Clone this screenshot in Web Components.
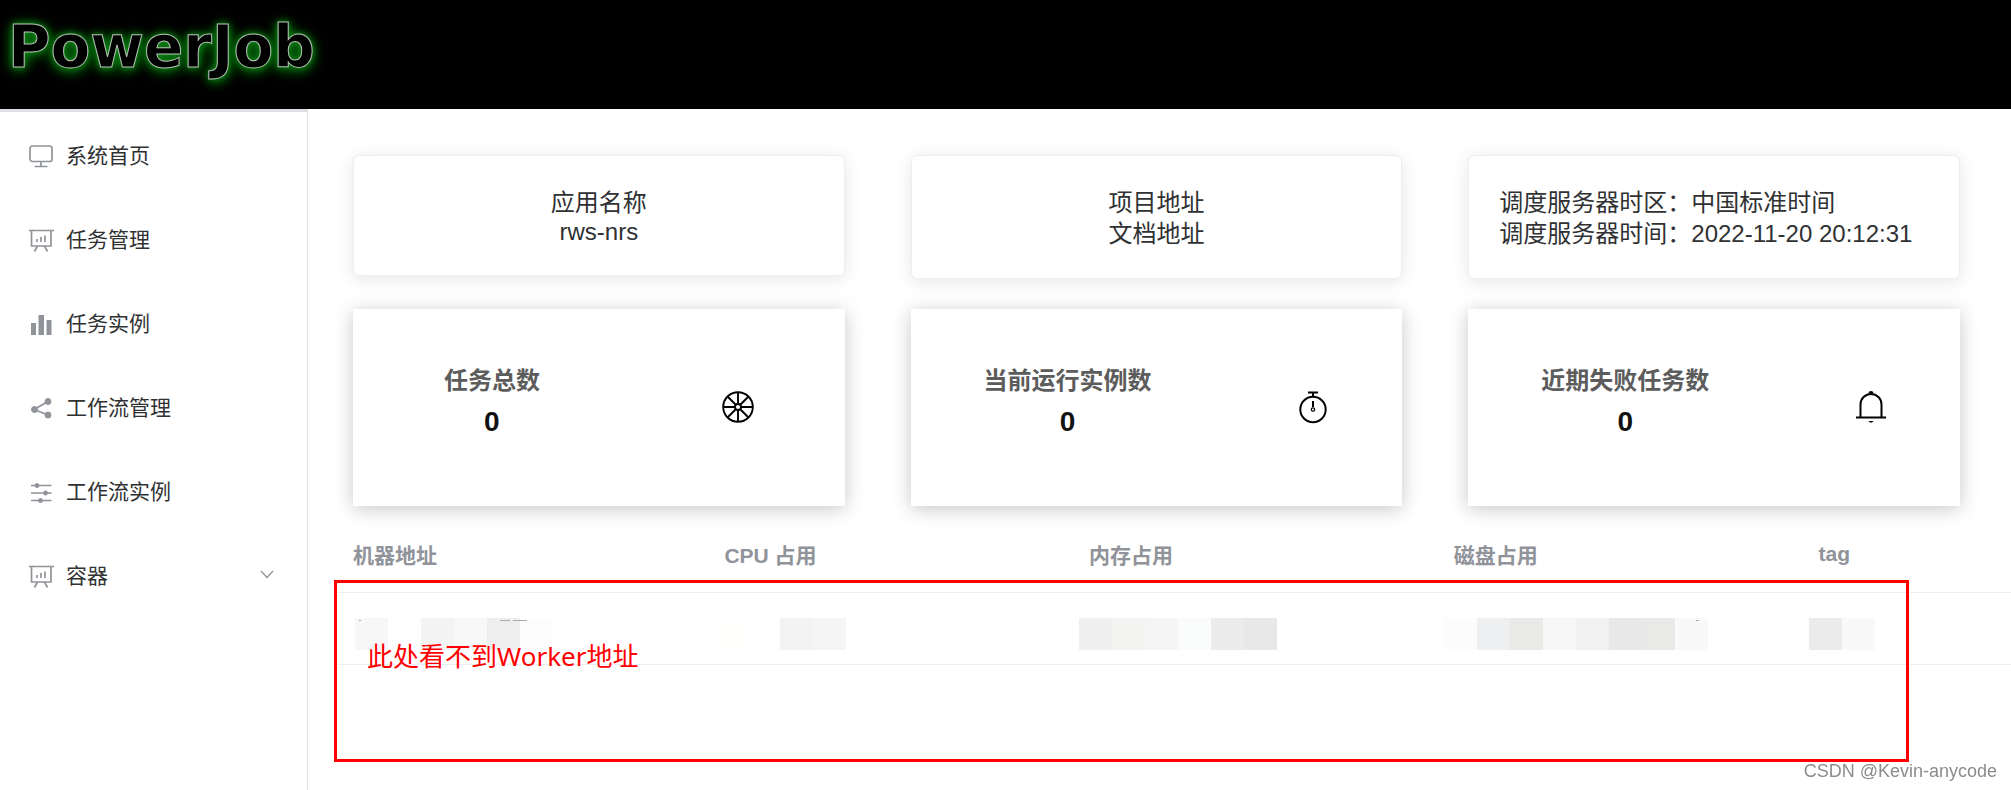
<!DOCTYPE html>
<html lang="zh-CN">
<head>
<meta charset="UTF-8">
<meta name="viewport" content="width=device-width, initial-scale=1.0">
<title>PowerJob</title>
<style>
  body {
    margin: 0;
    background: #fff;
    color: #303133;
    font-family: "Liberation Sans", "Noto Sans CJK SC", sans-serif;
  }
</style>
</head>
<body>
<power-app></power-app>

<script>
const icons = {
  monitor: `<g fill="none" stroke="currentColor" stroke-width="1.700"><rect x="1" y="1" width="22" height="15.500" rx="2.500"/><path d="M12 16.500v4.500M5.500 21.500h13"/></g>`,
  board: `<g fill="none" stroke="currentColor" stroke-width="1.700"><path d="M0 1.500h25M2.500 1.500v15.500h19.500v-15.500M8.500 17l-3 5.500M15.500 17l3 5.500"/><path d="M8 13v-3M12 13v-5M16 13v-6.500"/></g>`,
  bars: `<path fill="currentColor" d="M2 10h5v12H2zM9.500 2h5.500v20H9.500zM17.500 7h5v15h-5z"/>`,
  share: `<g fill="currentColor" stroke="currentColor"><path d="M5 12.500L19 4.500M5 12.500L19 18" stroke-width="1.800"/><circle cx="5.500" cy="12.500" r="3"/><circle cx="19" cy="4.500" r="3"/><circle cx="19" cy="18" r="3"/></g>`,
  sliders: `<g fill="currentColor" stroke="currentColor"><path d="M2 4.500h20.500M2 12h20.500M2 19.500h20.500" stroke-width="1.700"/><circle cx="8" cy="4.500" r="2"/><circle cx="16.500" cy="12" r="2"/><circle cx="11.500" cy="19.500" r="2"/></g>`,
  wheel: `<g fill="none" stroke="currentColor" stroke-width="1.900"><circle cx="16" cy="16" r="14.800"/><circle cx="16" cy="16" r="3"/><path d="M16 1v12M16 19v12M1 16h12M19 16h12M5.500 5.500l8.500 8.500M18 18l8.500 8.500M26.500 5.500l-8.500 8.500M14 18l-8.500 8.500"/></g>`,
  stopwatch: `<g fill="none" stroke="currentColor" stroke-width="2"><circle cx="16" cy="18.500" r="12.700"/><path d="M11 1.500h10M16 1.500v4M16 10v6"/><circle cx="16" cy="18.500" r="1.700" stroke-width="1.200"/></g>`,
  bell: `<g fill="none" stroke="currentColor" stroke-width="2"><path d="M5.500 26.500V13.500a10.500 10.500 0 0 1 21 0v13M1 26.500h30"/><path d="M13.500 2.500a2.500 2.500 0 0 1 5 0zM13.500 30h5l-1.500 1.500h-2z" fill="currentColor" stroke="none"/></g>`
};

class AppIcon extends HTMLElement {
  constructor() {
    super();
    this.attachShadow({ mode: "open" });
  }
  connectedCallback() {
    const size = this.getAttribute("size") || "24";
    this.shadowRoot.innerHTML = `
      <style>
        :host { display: block; flex: none; }
        svg { display: block; overflow: visible; }
      </style>
      <svg width="${size}" height="${size}" viewBox="0 0 ${size} ${size}" aria-hidden="true">${icons[this.getAttribute("name")]}</svg>
    `;
  }
}
customElements.define("app-icon", AppIcon);

class PowerHeader extends HTMLElement {
  constructor() {
    super();
    this.attachShadow({ mode: "open" });
  }
  connectedCallback() {
    this.shadowRoot.innerHTML = `
      <style>
        :host {
          display: flex;
          align-items: flex-start;
          height: 109px;
          background: #000;
        }
        a {
          padding: 15px 8px;
          color: #000;
          font: bold 58px/64px "DejaVu Sans", sans-serif;
          text-decoration: none;
          -webkit-text-stroke: 1px #b4c0b4;
          text-shadow: 0 0 6px #0a8a12, 0 2px 12px #087a10, 0 2px 16px #065c0b;
        }
      </style>
      <a href="#">PowerJob</a>
    `;
  }
}
customElements.define("power-header", PowerHeader);

class SideItem extends HTMLElement {
  constructor() {
    super();
    this.attachShadow({ mode: "open" });
  }
  connectedCallback() {
    this.shadowRoot.innerHTML = `
      <style>
        :host { display: block; }
        a {
          display: flex;
          align-items: center;
          height: 84px;
          padding: 0 33px 0 29px;
          color: #303133;
          font-size: 21px;
          text-decoration: none;
        }
        app-icon { margin-right: 13px; color: #909399; }
        .label { padding-bottom: 6px; }
        .arrow { margin-left: auto; padding-bottom: 3px; color: #909399; }
      </style>
      <a href="#">
        <app-icon name="${this.getAttribute("icon")}"></app-icon>
        <span class="label"><slot></slot></span>
        ${this.hasAttribute("expandable") ? `<svg class="arrow" width="14" height="14" viewBox="0 0 14 14" fill="none" stroke="currentColor" stroke-width="1.300"><path d="M1 2l6 6.500L13 2"/></svg>` : ""}
      </a>
    `;
  }
}
customElements.define("side-item", SideItem);

class SideMenu extends HTMLElement {
  constructor() {
    super();
    this.attachShadow({ mode: "open" });
  }
  connectedCallback() {
    this.shadowRoot.innerHTML = `
      <style>
        :host {
          display: block;
          box-sizing: border-box;
          width: 308px;
          flex: none;
          border-top: 3px solid #dcdfe3;
          border-right: 1px solid #e0e2e6;
          padding-top: 3px;
        }
      </style>
      <nav><slot></slot></nav>
    `;
  }
}
customElements.define("side-menu", SideMenu);

class InfoCard extends HTMLElement {
  constructor() {
    super();
    this.attachShadow({ mode: "open" });
  }
  connectedCallback() {
    this.shadowRoot.innerHTML = `
      <style>
        :host {
          display: block;
          padding: 31px 30px 29px;
          border: 1px solid #ebeef5;
          border-radius: 6px;
          background: #fff;
          box-shadow: 0 3px 18px rgba(0, 0, 0, 0.1);
          font-size: 24px;
          line-height: 31px;
          text-align: center;
        }
        :host([align="left"]) { text-align: left; }
        ::slotted(*) { display: block; color: inherit; text-decoration: none; }
        ::slotted(.latin) { line-height: 28px; }
      </style>
      <slot></slot>
    `;
  }
}
customElements.define("info-card", InfoCard);

class StatCard extends HTMLElement {
  constructor() {
    super();
    this.attachShadow({ mode: "open" });
  }
  connectedCallback() {
    this.shadowRoot.innerHTML = `
      <style>
        :host {
          display: flex;
          align-items: center;
          justify-content: space-around;
          box-sizing: border-box;
          min-height: 197px;
          padding-bottom: 2px;
          background: #fff;
          box-shadow: 0 3px 18px rgba(0, 0, 0, 0.22);
        }
        .text {
          padding-bottom: 12px;
          font-weight: bold;
          line-height: 41px;
          text-align: center;
        }
        .title { color: #5c5c5c; font-size: 24px; }
        .value { color: #111; font-size: 28px; }
        app-icon { color: #000; }
      </style>
      <div class="text">
        <div class="title"><slot></slot></div>
        <div class="value">${this.getAttribute("value")}</div>
      </div>
      <app-icon name="${this.getAttribute("icon")}" size="32"></app-icon>
    `;
  }
}
customElements.define("stat-card", StatCard);

class MosaicStrip extends HTMLElement {
  constructor() {
    super();
    this.attachShadow({ mode: "open" });
  }
  connectedCallback() {
    const tiles = this.getAttribute("tiles").split(" ");
    const rects = tiles.map((c, i) => c === "-" ? "" : `<rect x="${i * 33}" width="33" height="32" fill="#${c}"/>`).join("");
    const specks = (this.getAttribute("specks") || "").split(" ").filter(Boolean)
      .map((s) => s.split(","))
      .map(([x, w]) => `<rect x="${x}" y="2" width="${w}" height="1" fill="#aaa"/>`).join("");
    this.shadowRoot.innerHTML = `
      <style>
        :host { display: block; }
        svg { display: block; }
      </style>
      <svg width="${tiles.length * 33}" height="32" shape-rendering="crispEdges" aria-hidden="true">${rects}${specks}</svg>
    `;
  }
}
customElements.define("mosaic-strip", MosaicStrip);

class WorkerTable extends HTMLElement {
  constructor() {
    super();
    this.attachShadow({ mode: "open" });
  }
  connectedCallback() {
    this.shadowRoot.innerHTML = `
      <style>
        :host { display: block; position: relative; }
        table {
          width: 100%;
          table-layout: fixed;
          border-collapse: separate;
          border-spacing: 0;
        }
        th, td {
          box-sizing: border-box;
          height: 72px;
          border-bottom: 1px solid #ebeef5;
        }
        th {
          padding: 0 15px 5px;
          color: #909399;
          font-size: 21px;
          text-align: left;
        }
        td { padding: 10px 0 0 5px; }
        td:first-child { padding-left: 17px; }
        .first { width: 22.2%; }
        .col { width: 21.8%; }
      </style>
      <table>
        <colgroup><col class="first"><col class="col"><col class="col"><col class="col"><col></colgroup>
        <thead>
          <tr><th>机器地址</th><th>CPU 占用</th><th>内存占用</th><th>磁盘占用</th><th>tag</th></tr>
        </thead>
        <tbody>
          <tr>
            <td><mosaic-strip tiles="f7f7f7 - f3f3f3 f8f8f8 eeeeee fdfdfd" specks="4,2 145,10 158,14"></mosaic-strip></td>
            <td><mosaic-strip tiles="fefefc - f3f3f3 f5f5f5"></mosaic-strip></td>
            <td><mosaic-strip tiles="efefef f3f3f1 f5f5f5 fafcfb ececec e8e8e8"></mosaic-strip></td>
            <td><mosaic-strip tiles="fcfcfc eeeff1 e9e9e7 f7f7f7 f1f1f1 e8e8e8 e9e9e7 f9f9f9" specks="252,3"></mosaic-strip></td>
            <td><mosaic-strip tiles="ebebeb f9f9f9"></mosaic-strip></td>
          </tr>
        </tbody>
      </table>
      <slot></slot>
    `;
  }
}
customElements.define("worker-table", WorkerTable);

// Red frame with a remark, laid over the table body
class NoteFrame extends HTMLElement {
  constructor() {
    super();
    this.attachShadow({ mode: "open" });
  }
  connectedCallback() {
    this.shadowRoot.innerHTML = `
      <style>
        :host {
          position: absolute;
          top: 59px;
          left: -4px;
          right: 102px;
          box-sizing: border-box;
          height: 182px;
          padding: 53px 30px;
          border: 3px solid #f00;
          color: #f00;
          font: 26px/40px "Noto Sans", "Noto Sans CJK SC", sans-serif;
        }
      </style>
      <slot></slot>
    `;
  }
}
customElements.define("note-frame", NoteFrame);

class PowerApp extends HTMLElement {
  constructor() {
    super();
    this.attachShadow({ mode: "open" });
  }
  connectedCallback() {
    this.shadowRoot.innerHTML = `
      <style>
        :host {
          display: flex;
          flex-direction: column;
          min-height: 100vh;
        }
        .body { display: flex; flex: 1; }
        main { flex: 1; min-width: 0; padding-top: 46px; }
        .cards {
          display: grid;
          grid-template-columns: repeat(3, minmax(0, 1fr));
          column-gap: 66px;
          row-gap: 30px;
          align-items: start;
          padding: 0 51px 0 45px;
        }
        worker-table { margin: 15px 0 0 30px; }
        .watermark {
          position: fixed;
          right: 14px;
          bottom: 8px;
          color: #8c8c8c;
          font-size: 18px;
          line-height: 22px;
          text-shadow: 1px 1px 0 #fff;
        }
      </style>
      <power-header></power-header>
      <div class="body">
        <side-menu>
          <side-item icon="monitor">系统首页</side-item>
          <side-item icon="board">任务管理</side-item>
          <side-item icon="bars">任务实例</side-item>
          <side-item icon="share">工作流管理</side-item>
          <side-item icon="sliders">工作流实例</side-item>
          <side-item icon="board" expandable>容器</side-item>
        </side-menu>
        <main>
          <div class="cards">
            <info-card><span>应用名称</span><span class="latin">rws-nrs</span></info-card>
            <info-card><a href="#">项目地址</a><a href="#">文档地址</a></info-card>
            <info-card align="left"><span>调度服务器时区：中国标准时间</span><span>调度服务器时间：2022-11-20 20:12:31</span></info-card>
            <stat-card icon="wheel" value="0">任务总数</stat-card>
            <stat-card icon="stopwatch" value="0">当前运行实例数</stat-card>
            <stat-card icon="bell" value="0">近期失败任务数</stat-card>
          </div>
          <worker-table>
            <note-frame>此处看不到Worker地址</note-frame>
          </worker-table>
        </main>
      </div>
      <div class="watermark">CSDN @Kevin-anycode</div>
    `;
  }
}
customElements.define("power-app", PowerApp);
</script>
</body>
</html>
